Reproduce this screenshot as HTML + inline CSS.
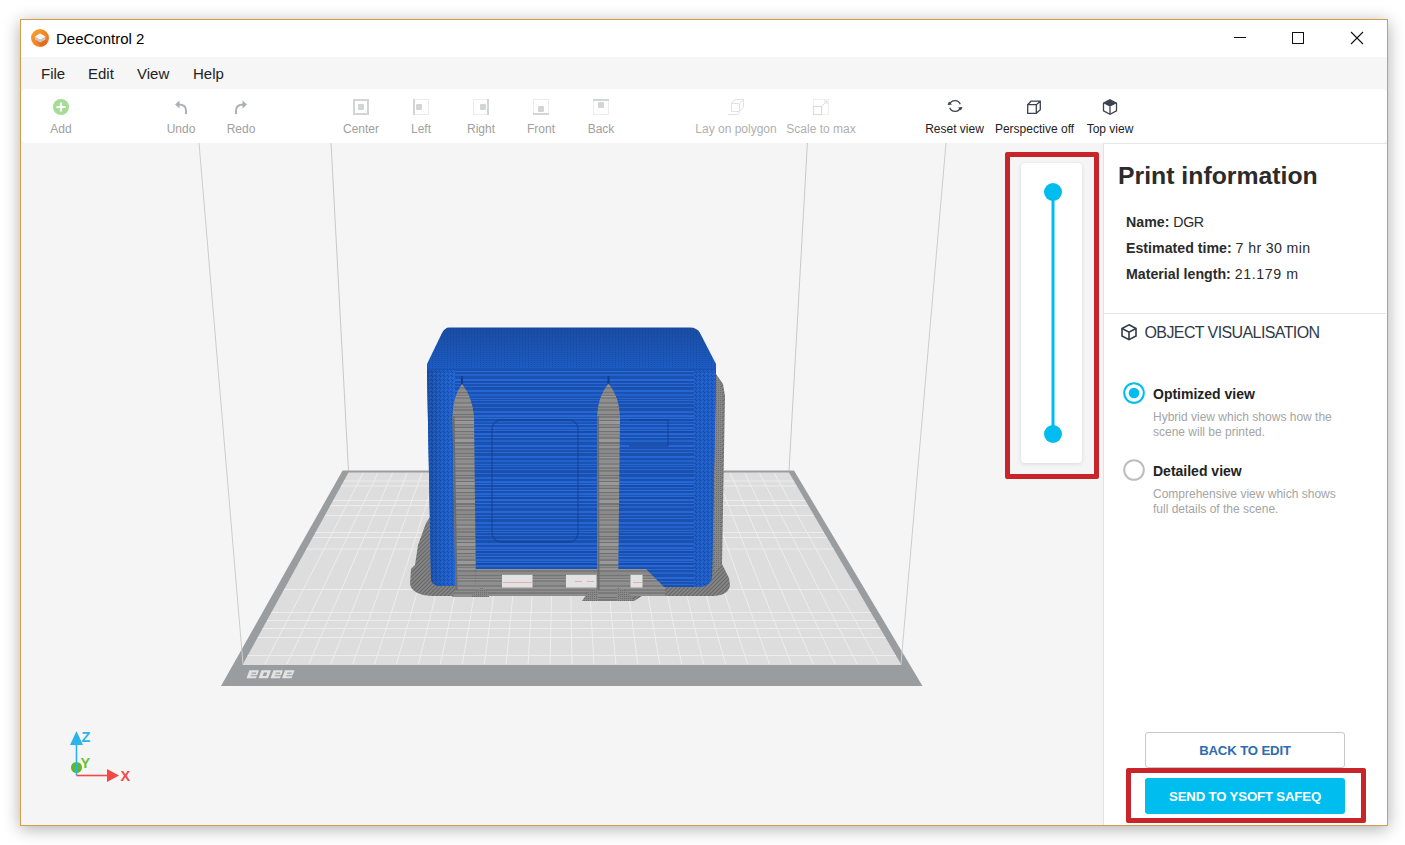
<!DOCTYPE html>
<html><head><meta charset="utf-8">
<style>
*{margin:0;padding:0;box-sizing:border-box}
html,body{width:1405px;height:845px;overflow:hidden;background:#fff;font-family:"Liberation Sans",sans-serif}
.abs{position:absolute}
#win{position:absolute;left:20px;top:19px;width:1368px;height:807px;border:1px solid #d69c4c;background:#fff;box-shadow:0 3px 16px rgba(0,0,0,0.32)}
.t{position:absolute;white-space:nowrap;line-height:1}
.tb{font-size:12px;padding-top:1px;color:#a0a0a0;text-align:center;width:120px;margin-left:-60px}
.tb.on{color:#222}
</style></head><body>
<div id="win"></div>
<!-- title bar -->
<svg class="abs" style="left:0;top:0" width="1405" height="845" viewBox="0 0 1405 845">
  <defs>
    <linearGradient id="og" x1="0" y1="0" x2="1" y2="1">
      <stop offset="0" stop-color="#f9a52c"/><stop offset="1" stop-color="#ee6a1c"/>
    </linearGradient>
  </defs>
  <circle cx="40" cy="38" r="9" fill="url(#og)"/>
  <clipPath id="icc"><circle cx="40" cy="38" r="9"/></clipPath><path clip-path="url(#icc)" d="M35 39.5L40 42.5L45.5 39.5L52 46L46 52Z" fill="#d9581a" opacity="0.45"/>
  <path d="M35 36.5L40 33.5L45.5 36.5V39.5L40 42.5L35 39.5Z" fill="#c8c8c8"/>
  <path d="M35 36.5L40 33.5L45.5 36.5L40 39.5Z" fill="#f6f6f6"/>
  <!-- window controls -->
  <path d="M1234 37.5H1246" stroke="#111" stroke-width="1"/>
  <rect x="1292.5" y="32.5" width="11" height="11" fill="none" stroke="#111" stroke-width="1"/>
  <path d="M1351 32L1363 44M1363 32L1351 44" stroke="#111" stroke-width="1.1"/>
</svg>
<div class="t" style="left:56px;top:31px;font-size:15px;color:#000">DeeControl 2</div>
<!-- menu bar -->
<div class="abs" style="left:21px;top:57px;width:1366px;height:86px;background:#f6f6f6"></div>
<div class="t" style="left:41px;top:66px;font-size:15px;color:#222">File</div>
<div class="t" style="left:88px;top:66px;font-size:15px;color:#222">Edit</div>
<div class="t" style="left:137px;top:66px;font-size:15px;color:#222">View</div>
<div class="t" style="left:193px;top:66px;font-size:15px;color:#222">Help</div>
<!-- toolbar -->
<div class="abs" style="left:21px;top:89px;width:1366px;height:54px;background:#fff;border-radius:5px"></div>
<!-- viewport -->
<div class="abs" style="left:21px;top:143px;width:1082px;height:682px;background:#f5f5f5"></div>
<!-- right panel -->
<div class="abs" style="left:1103px;top:143px;width:284px;height:682px;background:#fff;border-left:1px solid #e2e2e2;border-top:1px solid #e6e6e6"></div>

<!-- toolbar labels -->
<div class="t tb" style="left:61px;top:122px">Add</div>
<div class="t tb" style="left:181px;top:122px">Undo</div>
<div class="t tb" style="left:241px;top:122px">Redo</div>
<div class="t tb" style="left:361px;top:122px">Center</div>
<div class="t tb" style="left:421px;top:122px">Left</div>
<div class="t tb" style="left:481px;top:122px">Right</div>
<div class="t tb" style="left:541px;top:122px">Front</div>
<div class="t tb" style="left:601px;top:122px">Back</div>
<div class="t tb" style="left:736px;top:122px;color:#b0b0b0">Lay on polygon</div>
<div class="t tb" style="left:821px;top:122px;color:#b0b0b0">Scale to max</div>
<div class="t tb on" style="left:954.5px;top:122px">Reset view</div>
<div class="t tb on" style="left:1034.5px;top:122px">Perspective off</div>
<div class="t tb on" style="left:1110px;top:122px">Top view</div>

<!-- toolbar icons -->
<svg class="abs" style="left:0;top:0" width="1405" height="845" viewBox="0 0 1405 845">
  <circle cx="61" cy="107" r="8" fill="#a5dc95"/>
  <path d="M61 102.5V111.5M56.5 107H65.5" stroke="#fff" stroke-width="2.2"/>
  <!-- undo -->
  <path d="M186 114V110.5C186 106.5 183 104.5 178.5 104.5" fill="none" stroke="#a9b0b8" stroke-width="2"/>
  <path d="M175 104.5L179.5 100.5V108.5Z" fill="#a9b0b8"/>
  <!-- redo -->
  <path d="M236 114V110.5C236 106.5 239 104.5 243.5 104.5" fill="none" stroke="#a9b0b8" stroke-width="2"/>
  <path d="M247 104.5L242.5 100.5V108.5Z" fill="#a9b0b8"/>
  <!-- center -->
  <rect x="354" y="100" width="14" height="14" fill="none" stroke="#d2d4d6" stroke-width="2"/>
  <rect x="358" y="104" width="6" height="6" rx="1" fill="#d2d4d6"/>
  <!-- left -->
  <rect x="413.5" y="99.5" width="15" height="15" fill="none" stroke="#ececec" stroke-width="1"/>
  <path d="M414 99V115" stroke="#d2d4d6" stroke-width="2"/>
  <rect x="416" y="104" width="6" height="6" rx="1" fill="#d2d4d6"/>
  <!-- right -->
  <rect x="473.5" y="99.5" width="15" height="15" fill="none" stroke="#ececec" stroke-width="1"/>
  <path d="M488 99V115" stroke="#d2d4d6" stroke-width="2"/>
  <rect x="480" y="104" width="6" height="6" rx="1" fill="#d2d4d6"/>
  <!-- front -->
  <rect x="533.5" y="99.5" width="15" height="15" fill="none" stroke="#ececec" stroke-width="1"/>
  <path d="M533 114H549" stroke="#d2d4d6" stroke-width="2"/>
  <rect x="538" y="106" width="6" height="6" rx="1" fill="#d2d4d6"/>
  <!-- back -->
  <rect x="593.5" y="99.5" width="15" height="15" fill="none" stroke="#ececec" stroke-width="1"/>
  <path d="M593 100H609" stroke="#d2d4d6" stroke-width="2"/>
  <rect x="598" y="102" width="6" height="6" rx="1" fill="#d2d4d6"/>
  <!-- lay on polygon -->
  <g fill="none" stroke="#e2e2e2" stroke-width="1">
    <path d="M731.5 103.5H739.5V111.5H731.5Z M731.5 103.5L735 99.5H743.5V107.5L739.5 111.5 M739.5 103.5L743.5 99.5"/>
    <path d="M728 114.5H738L740 112"/>
  </g>
  <!-- scale to max -->
  <rect x="813.5" y="99.5" width="15" height="15" fill="none" stroke="#efefef" stroke-width="1"/>
  <rect x="813.5" y="106.5" width="8" height="8" fill="none" stroke="#dcdcdc" stroke-width="1.2"/>
  <path d="M822 106L827 101M824 101H827V104" fill="none" stroke="#dcdcdc" stroke-width="1"/>
  <!-- reset view -->
  <g fill="none" stroke="#3b4350" stroke-width="1.3">
    <path d="M949.5 104.5A5.8 5.8 0 0 1 960.3 104.2"/>
    <path d="M960.5 107.5A5.8 5.8 0 0 1 949.7 107.8"/>
  </g>
  <path d="M947.5 105L949 101.5L952 104.5Z M962.5 107L961 110.5L958 107.5Z" fill="#3b4350"/>
  <!-- perspective off -->
  <g fill="none" stroke="#3b4350" stroke-width="1.3">
    <path d="M1027.7 104.7H1036.3V113.3H1027.7Z M1027.7 104.7L1031 101.2H1040.3V109.8L1036.3 113.3 M1036.3 104.7L1040.3 101.2"/>
  </g>
  <!-- top view -->
  <path d="M1110 99.7L1116.5 103.2V110.8L1110 114.3L1103.5 110.8V103.2Z" fill="none" stroke="#3b4350" stroke-width="1.3"/>
  <path d="M1110 99.7L1116.5 103.2L1110 106.7L1103.5 103.2Z" fill="#3b4350"/>
  <path d="M1110 106.7V114" stroke="#3b4350" stroke-width="1.3"/>
</svg>

<!-- 3D scene -->
<svg class="abs" style="left:0;top:0" width="1405" height="845" viewBox="0 0 1405 845">
  <g stroke="#c9c9c9" stroke-width="1">
    <path d="M331 143L348.5 471M807.4 143L789 471"/>
  </g>
  <path d="M342.6 470.5H794L922.5 686H221Z" fill="#9a9da0"/>
  <path d="M348.5 472.5H789L901.5 665H242.5Z" fill="#dddddd"/>
  <path d="M199 143L243 664M946 143L901 664" stroke="#cdcdcd" stroke-width="1"/>
  <path d="M264.9 664.0L363.2 472.9M286.9 664.0L377.8 472.9M308.8 664.0L392.5 472.9M330.7 664.0L407.2 472.9M352.7 664.0L421.9 472.9M374.6 664.0L436.6 472.9M396.5 664.0L451.2 472.9M418.5 664.0L465.9 472.9M440.4 664.0L480.6 472.9M462.3 664.0L495.3 472.9M484.3 664.0L510.0 472.9M506.2 664.0L524.7 472.9M528.1 664.0L539.3 472.9M550.1 664.0L554.0 472.9M572.0 664.0L568.7 472.9M593.9 664.0L583.4 472.9M615.9 664.0L598.1 472.9M637.8 664.0L612.7 472.9M659.7 664.0L627.4 472.9M681.7 664.0L642.1 472.9M703.6 664.0L656.8 472.9M725.5 664.0L671.5 472.9M747.5 664.0L686.1 472.9M769.4 664.0L700.8 472.9M791.3 664.0L715.5 472.9M813.3 664.0L730.2 472.9M835.2 664.0L744.9 472.9M857.1 664.0L759.5 472.9M879.1 664.0L774.2 472.9" stroke="#eeeeee" stroke-width="0.9" fill="none"/>
  <path d="M344.0 481H793.7M341.2 486H796.6M333.2 500.5H805.1M330.5 505.5H808.0M325.0 515.5H813.9M315.6 532.5H823.9M312.8 537.5H826.8M306.5 549H833.6M284.1 589.5H857.3M271.4 612.5H870.8M267.0 620.5H875.5M262.6 628.5H880.2M257.6 637.5H885.5M247.7 655.5H896.0" stroke="#ededed" stroke-width="1" fill="none"/>

  <defs>
    <pattern id="stripeB" width="16" height="66" patternUnits="userSpaceOnUse"><rect y="0" width="16" height="2" fill="#1c54b6"/><rect y="2" width="16" height="1" fill="#2466d4"/><rect y="3" width="16" height="1" fill="#1a50ae"/><rect y="4" width="16" height="1" fill="#2466d4"/><rect y="5" width="16" height="2" fill="#1a50ae"/><rect y="7" width="16" height="1" fill="#2768d6"/><rect y="8" width="16" height="3" fill="#1a50ae"/><rect y="11" width="16" height="1" fill="#2466d4"/><rect y="12" width="16" height="3" fill="#1a50ae"/><rect y="15" width="16" height="2" fill="#2466d4"/><rect y="17" width="16" height="2" fill="#1a50ae"/><rect y="19" width="16" height="2" fill="#2768d6"/><rect y="21" width="16" height="1" fill="#1c54b6"/><rect y="22" width="16" height="1" fill="#2a6ddc"/><rect y="23" width="16" height="2" fill="#184ca8"/><rect y="25" width="16" height="1" fill="#2466d4"/><rect y="26" width="16" height="2" fill="#1c54b6"/><rect y="28" width="16" height="1" fill="#2a6ddc"/><rect y="29" width="16" height="2" fill="#1a50ae"/><rect y="31" width="16" height="2" fill="#2466d4"/><rect y="33" width="16" height="1" fill="#1c54b6"/><rect y="34" width="16" height="1" fill="#2768d6"/><rect y="35" width="16" height="2" fill="#184ca8"/><rect y="37" width="16" height="2" fill="#2768d6"/><rect y="39" width="16" height="2" fill="#1b52b2"/><rect y="41" width="16" height="1" fill="#2a6ddc"/><rect y="42" width="16" height="2" fill="#1a50ae"/><rect y="44" width="16" height="2" fill="#2262cc"/><rect y="46" width="16" height="3" fill="#1b52b2"/><rect y="49" width="16" height="2" fill="#2768d6"/><rect y="51" width="16" height="2" fill="#1a50ae"/><rect y="53" width="16" height="1" fill="#2768d6"/><rect y="54" width="16" height="2" fill="#1b52b2"/><rect y="56" width="16" height="1" fill="#2768d6"/><rect y="57" width="16" height="3" fill="#1a50ae"/><rect y="60" width="16" height="2" fill="#2466d4"/><rect y="62" width="16" height="2" fill="#1b52b2"/><rect y="64" width="16" height="2" fill="#2262cc"/></pattern>
    <pattern id="stripeG" width="16" height="61" patternUnits="userSpaceOnUse"><rect y="0" width="16" height="1" fill="#707070"/><rect y="1" width="16" height="3" fill="#949494"/><rect y="4" width="16" height="1" fill="#707070"/><rect y="5" width="16" height="2" fill="#8e8e8e"/><rect y="7" width="16" height="1" fill="#7e7e7e"/><rect y="8" width="16" height="2" fill="#8e8e8e"/><rect y="10" width="16" height="2" fill="#7a7a7a"/><rect y="12" width="16" height="3" fill="#999999"/><rect y="15" width="16" height="2" fill="#747474"/><rect y="17" width="16" height="1" fill="#8e8e8e"/><rect y="18" width="16" height="1" fill="#7a7a7a"/><rect y="19" width="16" height="2" fill="#949494"/><rect y="21" width="16" height="2" fill="#7a7a7a"/><rect y="23" width="16" height="3" fill="#8a8a8a"/><rect y="26" width="16" height="1" fill="#747474"/><rect y="27" width="16" height="2" fill="#8a8a8a"/><rect y="29" width="16" height="1" fill="#7a7a7a"/><rect y="30" width="16" height="1" fill="#999999"/><rect y="31" width="16" height="2" fill="#7e7e7e"/><rect y="33" width="16" height="3" fill="#8e8e8e"/><rect y="36" width="16" height="2" fill="#7e7e7e"/><rect y="38" width="16" height="2" fill="#949494"/><rect y="40" width="16" height="2" fill="#7e7e7e"/><rect y="42" width="16" height="1" fill="#8e8e8e"/><rect y="43" width="16" height="2" fill="#7a7a7a"/><rect y="45" width="16" height="3" fill="#8e8e8e"/><rect y="48" width="16" height="1" fill="#707070"/><rect y="49" width="16" height="1" fill="#8e8e8e"/><rect y="50" width="16" height="2" fill="#7a7a7a"/><rect y="52" width="16" height="2" fill="#949494"/><rect y="54" width="16" height="1" fill="#707070"/><rect y="55" width="16" height="3" fill="#999999"/><rect y="58" width="16" height="1" fill="#7a7a7a"/><rect y="59" width="16" height="2" fill="#8a8a8a"/></pattern>
    <pattern id="dotB" width="2" height="2" patternUnits="userSpaceOnUse">
      <rect width="2" height="2" fill="#1f5cbf"/>
      <rect width="1" height="1" fill="#174ca6"/>
    </pattern>
    <pattern id="dotG" width="4" height="4" patternUnits="userSpaceOnUse">
      <rect width="4" height="4" fill="#858585"/>
      <path d="M0 4L4 0M-1 1L1 -1M3 5L5 3" stroke="#686868" stroke-width="1.2"/>
    </pattern>
    <pattern id="topB" width="3" height="2" patternUnits="userSpaceOnUse">
      <rect width="1" height="1" fill="#0d3a8a" opacity="0.35"/>
    </pattern>
    <linearGradient id="topG" x1="0" y1="0" x2="0" y2="1">
      <stop offset="0" stop-color="#194da2"/><stop offset="1" stop-color="#1d5cc4"/>
    </linearGradient>
    <linearGradient id="cornL" x1="0" y1="0" x2="1" y2="0">
      <stop offset="0" stop-color="#1a4ca6"/><stop offset="0.5" stop-color="#1d5abf"/><stop offset="1" stop-color="#2062cf"/>
    </linearGradient>
    <linearGradient id="cornR" x1="0" y1="0" x2="1" y2="0">
      <stop offset="0" stop-color="#1d5bc2"/><stop offset="1" stop-color="#1f5ec8"/>
    </linearGradient>
    <pattern id="noiseB" width="4" height="4" patternUnits="userSpaceOnUse">
      <rect x="0" y="0" width="1" height="1" fill="#0b3a8c" opacity="0.5"/>
      <rect x="2" y="1" width="1" height="1" fill="#3b7ae0" opacity="0.5"/>
      <rect x="1" y="2" width="1" height="1" fill="#3b7ae0" opacity="0.4"/>
      <rect x="3" y="3" width="1" height="1" fill="#0b3a8c" opacity="0.5"/>
    </pattern>
    <pattern id="dotG2" width="2" height="2" patternUnits="userSpaceOnUse">
      <rect width="2" height="2" fill="#888"/>
      <rect width="1" height="1" fill="#6e6e6e"/>
    </pattern>
  </defs>
  <!-- brim silhouette -->
  <path d="M430 517L426 523L418 545L415 565L411 569L410 584Q412 595 432 596H590L596 601H634L642 596H714Q729 595 730 585L729 578L722 564L725 396L723 384L716 374H430Z" fill="url(#dotG)"/>
  <path d="M716 376L720 380L722.5 394L720.5 566L714 574Z" fill="url(#dotG2)"/>
  <!-- front ledge (gray) -->
  <rect x="470" y="566" width="195" height="30" fill="url(#stripeG)"/>
  <rect x="502" y="574.5" width="30.5" height="13" fill="#e2e2e2"/>
  <rect x="566" y="574.5" width="30.5" height="13" fill="#e2e2e2"/>
  <rect x="630.5" y="574.5" width="12" height="13" fill="#e2e2e2"/>
  <path d="M502 574.5H532.5M566 574.5H596.5M630.5 574.5H642.5" stroke="#9a9a9a" stroke-width="1"/>
  <path d="M503 582.5H532M575 581.5H582M587 581.5H594M633 582.5H642" stroke="#e88a8a" stroke-width="1" opacity="0.6"/>
  <!-- front face blue -->
  <path d="M427 370H716L712 576Q711 587 698 587H664L646 569H476V586H441Q431 586 431 578Z" fill="url(#stripeB)"/>
  <!-- corners textured -->
  <path d="M427 370H455V586H441Q431 586 431 578Z" fill="url(#cornL)"/>
  <path d="M427 370H455V586H441Q431 586 431 578Z" fill="url(#noiseB)"/>
  <path d="M694 370H716L712 576Q711 587 698 587H694Z" fill="url(#cornR)"/>
  <path d="M694 370H716L712 576Q711 587 698 587H694Z" fill="url(#noiseB)"/>
  <!-- window & small rect outlines -->
  <rect x="492" y="420" width="86" height="122" rx="9" fill="none" stroke="#143f92" stroke-width="1.3" opacity="0.7"/>
  <path d="M629 420H668V446H629" fill="none" stroke="#143f92" stroke-width="1.3" opacity="0.7"/>
  <!-- top face -->
  <path d="M449 327.5H690Q697 327.5 700 333L716 364V370H427V364L442 333Q445 327.5 449 327.5Z" fill="url(#topG)"/>
  <path d="M449 327.5H690Q697 327.5 700 333L716 364V370H427V364L442 333Q445 327.5 449 327.5Z" fill="url(#topB)"/>
  <path d="M427 369.5H716" stroke="#1a50b0" stroke-width="1.5"/>
  <!-- pillars -->
  <path d="M462 376V384" stroke="#103f8e" stroke-width="2"/>
  <path d="M462 384Q472 396 474 416L476 590L480 597H452L455.5 590L452.5 416Q453 396 462 384Z" fill="url(#stripeG)"/>
  <path d="M453.5 416L456.5 590" stroke="#6c6c6c" stroke-width="2"/>
  <path d="M608.5 376V384" stroke="#103f8e" stroke-width="2"/>
  <path d="M608.5 383.5Q619 396 620 416L618 596H597L597 416Q598 396 608.5 383.5Z" fill="url(#stripeG)"/>
  <path d="M582 601Q588 590 597 588H618Q630 590 634 601Z" fill="url(#dotG2)"/>
  <rect x="598" y="588" width="19" height="13" fill="url(#stripeG)"/>
  <path d="M471 597Q476 588 482 588Q488 589 489 597Z" fill="url(#dotG2)"/>
  <path d="M598 416L598.5 590" stroke="#6c6c6c" stroke-width="2"/>
  <path d="M246.5 678.3H256.0L259.0 670.3H249.5ZM258.5 678.3H268.0L271.0 670.3H261.5ZM270.5 678.3H280.0L283.0 670.3H273.5ZM282.0 678.3H291.5L294.5 670.3H285.0Z" fill="#e3e3e3"/>
  <path d="M251.4 673.8H255.9L256.4 672.5H251.9ZM250.5 676.2H257.5L257.9 675.2H250.9ZM262.7 676.0H266.1L267.3 672.6H263.9ZM275.4 673.8H279.9L280.4 672.5H275.9ZM274.5 676.2H281.5L281.9 675.2H274.9ZM286.9 673.8H291.4L291.9 672.5H287.4ZM286.0 676.2H293.0L293.4 675.2H286.4Z" fill="#9a9da0"/>
</svg>

<!-- slider -->
<div class="abs" style="left:1021px;top:163px;width:61px;height:300px;background:#fff;border-radius:4px;box-shadow:0 1px 4px rgba(0,0,0,0.12)"></div>
<svg class="abs" style="left:0;top:0" width="1405" height="845" viewBox="0 0 1405 845">
  <path d="M1053 192V434" stroke="#00bcef" stroke-width="3"/>
  <circle cx="1053" cy="192" r="9" fill="#00bcef"/>
  <circle cx="1053" cy="434" r="9" fill="#00bcef"/>
</svg>
<div class="abs" style="left:1005px;top:152px;width:94px;height:327px;border:5px solid #c9242a;border-radius:2px"></div>

<!-- right panel content -->
<div class="t" style="left:1118px;top:164px;font-size:24.8px;font-weight:bold;color:#2b2b2b">Print information</div>
<div class="t" style="left:1126px;top:215px;font-size:14.2px;color:#2b2b2b"><b>Name:</b> <span style="letter-spacing:-0.4px">DGR</span></div>
<div class="t" style="left:1126px;top:241px;font-size:14.2px;color:#2b2b2b"><b>Estimated time:</b> <span style="letter-spacing:0.35px">7 hr 30 min</span></div>
<div class="t" style="left:1126px;top:267px;font-size:14.2px;color:#2b2b2b"><b>Material length:</b> <span style="letter-spacing:0.6px">21.179 m</span></div>
<div class="abs" style="left:1104px;top:313px;width:282px;height:1px;background:#e4e4e4"></div>
<svg class="abs" style="left:0;top:0" width="1405" height="845" viewBox="0 0 1405 845">
  <path d="M1129 324.8L1136 328.5V336L1129 339.7L1122 336V328.5Z" fill="none" stroke="#2f3a48" stroke-width="1.6"/>
  <path d="M1122 328.5L1129 332.2L1136 328.5M1129 332.2V339.7" fill="none" stroke="#2f3a48" stroke-width="1.6"/>
</svg>
<div class="t" style="left:1144.5px;top:324.5px;font-size:16px;letter-spacing:-0.6px;color:#2f3a48">OBJECT VISUALISATION</div>

<svg class="abs" style="left:0;top:0" width="1405" height="845" viewBox="0 0 1405 845">
  <circle cx="1134" cy="393" r="9.8" fill="none" stroke="#00bcef" stroke-width="2"/>
  <circle cx="1134" cy="393" r="5.3" fill="#00bcef"/>
  <circle cx="1134" cy="470" r="9.8" fill="none" stroke="#bdbdbd" stroke-width="2"/>
</svg>
<div class="t" style="left:1153px;top:386.5px;font-size:14px;font-weight:bold;color:#222">Optimized view</div>
<div class="t" style="left:1153px;top:410px;font-size:12px;color:#a4a4a4;line-height:15px;white-space:normal;width:200px">Hybrid view which shows how the<br>scene will be printed.</div>
<div class="t" style="left:1153px;top:463.5px;font-size:14px;font-weight:bold;color:#222">Detailed view</div>
<div class="t" style="left:1153px;top:487px;font-size:12px;color:#a4a4a4;line-height:15px;white-space:normal;width:200px">Comprehensive view which shows<br>full details of the scene.</div>

<!-- buttons -->
<div class="abs" style="left:1145px;top:732px;width:200px;height:36px;border:1px solid #c8c8c8;border-radius:3px;background:#fff"></div>
<div class="t" style="left:1145px;top:743.5px;width:200px;text-align:center;font-size:13.2px;letter-spacing:-0.15px;font-weight:bold;color:#2d6cb0">BACK TO EDIT</div>
<div class="abs" style="left:1145px;top:778px;width:200px;height:36px;border-radius:3px;background:#00bdf0"></div>
<div class="t" style="left:1145px;top:789.5px;width:200px;text-align:center;font-size:13.2px;letter-spacing:-0.15px;font-weight:bold;color:#fff">SEND TO YSOFT SAFEQ</div>
<div class="abs" style="left:1126px;top:768px;width:240px;height:55px;border:5px solid #c9242a;border-radius:2px"></div>

<!-- axis -->
<svg class="abs" style="left:0;top:0" width="1405" height="845" viewBox="0 0 1405 845">
  <circle cx="76.5" cy="767.5" r="5.5" fill="#5cb82e"/>
  <path d="M76.5 775.5V744" stroke="#2ab4e8" stroke-width="1.6"/>
  <path d="M70 745L76.5 731L83 745Z" fill="#2ab4e8"/>
  <path d="M76.5 775.5H108" stroke="#f24848" stroke-width="1.6"/>
  <path d="M107 769L119 775.5L107 782Z" fill="#f24848"/>
  <text x="81.5" y="742.3" font-family="Liberation Sans" font-weight="bold" font-size="14.5" fill="#2ab4e8">Z</text>
  <text x="80.5" y="768" font-family="Liberation Sans" font-weight="bold" font-size="14.5" fill="#6cc22e">Y</text>
  <text x="120.5" y="780.8" font-family="Liberation Sans" font-weight="bold" font-size="14.5" fill="#f24848">X</text>
</svg>
</body></html>
